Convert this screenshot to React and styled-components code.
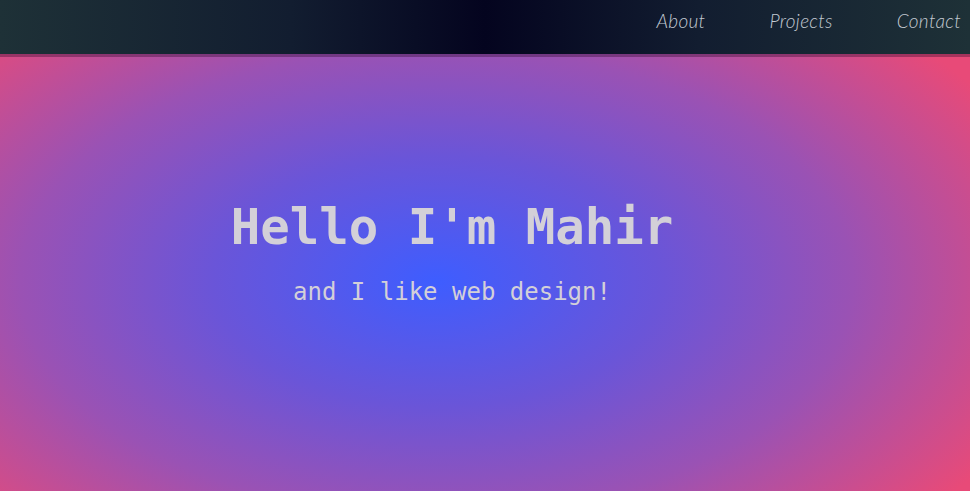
import React from 'react'
import styled, { createGlobalStyle } from 'styled-components';

const GlobalStyle = createGlobalStyle`
  html, body {
    margin: 0;
    padding: 0;
    height: 100%;
    overflow: hidden;
  }
  #root {
    height: 100%;
  }
`;

const Page = styled.div`
  height: 100vh;
  display: flex;
  flex-direction: column;
`;

const Nav = styled.nav`
  height: 54px;
  flex-shrink: 0;
  position: relative;
  z-index: 1;
  display: flex;
  justify-content: flex-end;
  align-items: center;
  gap: 64px;
  padding-right: 9px;
  background: linear-gradient(90deg, #1e3137 0%, #121d30 30%, #04041f 50%, #121d30 72%, #1e3137 100%);
  box-shadow: 0 3px 0 rgba(40, 10, 40, 0.35);
`;

const NavLink = styled.a`
  font-family: "Lato", "Open Sans", sans-serif;
  font-style: italic;
  font-weight: 300;
  font-size: 19px;
  color: #c3cad2;
  text-decoration: none;
  letter-spacing: 0.3px;
  padding-bottom: 14px;
`;

const Hero = styled.main`
  flex: 1;
  display: flex;
  flex-direction: column;
  align-items: center;
  justify-content: center;
  padding-right: 66px;
  padding-bottom: 40px;
  background: radial-gradient(ellipse 66% 82% at 45% 52%, #3e5dff 0%, #6a55d8 35%, #9a52b4 65%, #e84a78 100%);
`;

const Title = styled.h1`
  margin: 0;
  font-family: "DejaVu Sans Mono", "Liberation Mono", monospace;
  font-weight: bold;
  font-size: 49px;
  color: #d3d0d8;
`;

const Subtitle = styled.h2`
  margin: 22px 0 0;
  font-family: "DejaVu Sans Mono", "Liberation Mono", monospace;
  font-weight: normal;
  font-size: 24px;
  color: #d3d0d8;
`;

const App = () => {
  return (
    <Page>
      <GlobalStyle />
      <Nav>
        <NavLink href="#about">About</NavLink>
        <NavLink href="#projects">Projects</NavLink>
        <NavLink href="#contact">Contact</NavLink>
      </Nav>
      <Hero>
        <Title>Hello I'm Mahir</Title>
        <Subtitle>and I like web design!</Subtitle>
      </Hero>
    </Page>
  )
}

export default App
